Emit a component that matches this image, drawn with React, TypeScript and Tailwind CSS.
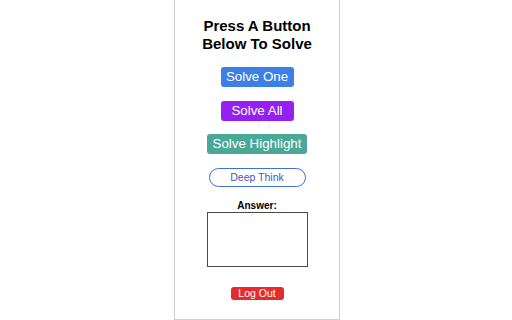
const font = { fontFamily: '"Liberation Sans", Arial, sans-serif' };

const SolveButton = ({ label, className }: { label: string; className: string }) => (
  <button
    className={`block h-[20px] rounded-[3px] text-center text-[13.33px] leading-none text-white ${className}`}
  >
    {label}
  </button>
);

export default function App() {
  return (
    <div className="flex h-[320px] w-[512px] justify-center bg-white" style={font}>
      <div className="ml-[2px] flex h-[320px] w-[166px] flex-col items-center border-x border-b border-[#cfcfcf]">
        <h1 className="mt-[17px] text-center text-[15px] font-bold leading-[18px] text-black">
          Press A Button
          <br />
          Below To Solve
        </h1>

        <SolveButton label="Solve One" className="mt-[14px] w-[73px] bg-[#3c7fe6]" />
        <SolveButton label="Solve All" className="mt-[14px] w-[73px] bg-[#9420f2]" />
        <SolveButton label="Solve Highlight" className="mt-[13px] w-[100px] bg-[#4ba797]" />

        <button className="mt-[14px] block h-[19px] w-[97px] rounded-full border-[1.5px] border-[#3a6fe0] bg-white text-[10.5px] leading-none text-[#3d56c8]">
          Deep Think
        </button>

        <div className="mt-[13px] h-[12px] text-[10px] font-bold leading-[12px] text-black">
          Answer:
        </div>
        <textarea className="block h-[55px] w-[101px] resize-none border border-[#4a4a4a] bg-white outline-none" />

        <button className="mt-[20px] block h-[13px] w-[53px] rounded-[3px] bg-[#e52b2b] text-[10.5px] leading-none text-white">
          Log Out
        </button>
      </div>
    </div>
  );
}
